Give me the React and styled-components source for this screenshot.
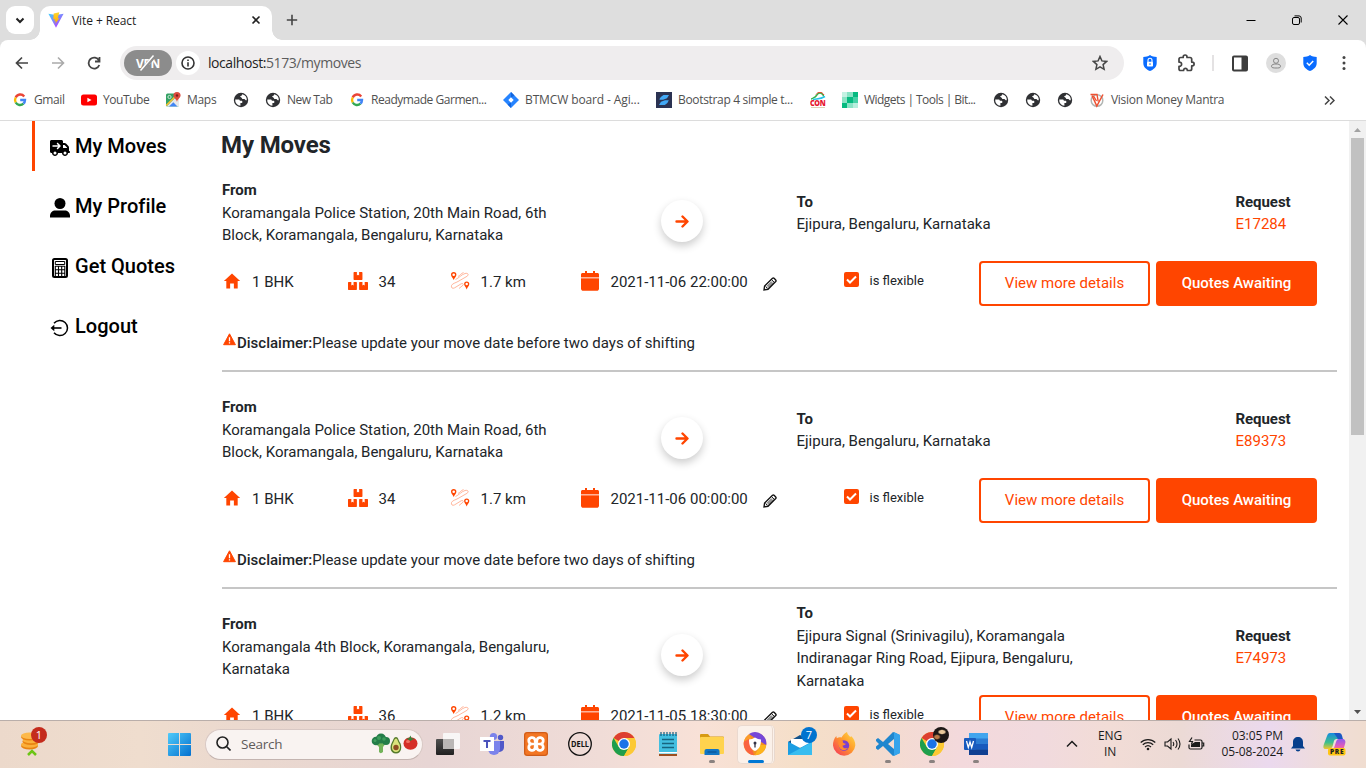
import React from 'react';
import styled, { createGlobalStyle } from 'styled-components';
import { FaBoxes } from 'react-icons/fa';
import { FaTruckArrowRight } from 'react-icons/fa6';
import { IoMdHome } from 'react-icons/io';

const ORANGE = '#ff4500';

const Global = createGlobalStyle`
  * { box-sizing: border-box; }
  body { margin: 0; overflow: hidden; background: #fff; font-family: Roboto, "Liberation Sans", sans-serif; }
  svg { display: block; flex: none; }
`;

const Screen = styled.div`
  width: 1366px;
  height: 768px;
  display: flex;
  flex-direction: column;
  overflow: hidden;
`;

/* ---------- browser chrome ---------- */
const TabStrip = styled.div`
  height: 40px;
  flex: none;
  display: flex;
  align-items: flex-start;
  padding: 6px 0 0 6px;
  background: #dedede;
`;
const TabSearch = styled.div`
  width: 28px;
  height: 28px;
  border-radius: 9px;
  background: #fff;
  display: grid;
  place-items: center;
`;
const Tab = styled.div`
  position: relative;
  width: 232px;
  height: 34px;
  margin-left: 6px;
  padding: 0 10px 6px 8px;
  border-radius: 10px 10px 0 0;
  background: #fff;
  display: flex;
  align-items: center;
  font: 12px "Open Sans", sans-serif;
  letter-spacing: -0.08px;
  color: #1f1f1f;
  &::before, &::after {
    content: '';
    position: absolute;
    bottom: 0;
    width: 10px;
    height: 10px;
  }
  &::before { left: -10px; background: radial-gradient(circle at 0 0, transparent 9.5px, #fff 10px); }
  &::after { right: -10px; background: radial-gradient(circle at 100% 0, transparent 9.5px, #fff 10px); }
`;
const TabTitle = styled.span`
  margin-left: 8px;
  flex: 1;
`;
const NewTab = styled.div`
  width: 40px;
  height: 28px;
  display: grid;
  place-items: center;
`;
const WindowButtons = styled.div`
  margin-left: auto;
  height: 28px;
  display: flex;
  & > * { width: 46px; display: grid; place-items: center; }
`;
const ToolbarBack = styled.div`
  flex: none;
  background: #dedede;
`;
const Toolbar = styled.div`
  height: 46px;
  display: flex;
  align-items: center;
  background: #fff;
  border-radius: 8px 8px 0 0;
`;
const ToolButton = styled.div`
  width: ${p => p.$w || 36}px;
  height: 36px;
  display: grid;
  place-items: center;
`;
const Omnibox = styled.div`
  width: 1004px;
  height: 34px;
  margin-left: 4px;
  padding: 0 6px 0 4px;
  border-radius: 17px;
  background: #efedee;
  display: flex;
  align-items: center;
`;
const VpnPill = styled.div`
  position: relative;
  width: 48px;
  height: 26px;
  border-radius: 13px;
  background: #8c8c8c;
  color: #fff;
  display: grid;
  place-items: center;
  font: 700 12px "Open Sans", sans-serif;
  & > span { letter-spacing: -0.3px; }
  & > svg { position: absolute; left: 11px; top: 4px; }
`;
const SiteInfo = styled.div`
  width: 24px;
  height: 24px;
  margin: 0 8px 0 4px;
  border-radius: 50%;
  background: #fff;
  display: grid;
  place-items: center;
`;
const Url = styled.div`
  flex: 1;
  padding-bottom: 1px;
  font: 14px "Open Sans", sans-serif;
  letter-spacing: -0.43px;
  color: #5c5c5c;
  & > b { font-weight: 400; color: #1f1f1f; }
`;
const Separator = styled.div`
  width: 2px;
  height: 16px;
  margin-left: 16px;
  background: #e4e2e3;
`;
const Avatar = styled.div`
  width: 20px;
  height: 20px;
  border-radius: 50%;
  background: #dedede;
  display: grid;
  place-items: center;
`;
const Bookmarks = styled.div`
  height: 35px;
  flex: none;
  display: flex;
  align-items: center;
  padding: 0 26px 6px 12px;
  border-bottom: 1px solid #dcdcdc;
  background: #fff;
`;
const Bookmark = styled.div`
  width: ${p => p.$w}px;
  flex: none;
  display: flex;
  align-items: center;
  gap: 6px;
  font: 12px "Open Sans", sans-serif;
  letter-spacing: ${p => p.$ls ?? -0.3}px;
  white-space: nowrap;
  color: #505050;
  & > span { padding-bottom: 1px; }
`;
const Overflow = styled.div`
  margin-left: auto;
  margin-right: 5px;
`;

/* ---------- page ---------- */
const Viewport = styled.div`
  height: 599px;
  flex: none;
  display: flex;
  overflow: hidden;
  background: #fff;
`;
const Sidebar = styled.nav`
  width: 222px;
  flex: none;
  padding-left: 32px;
  display: flex;
  flex-direction: column;
  gap: 10px;
`;
const NavItem = styled.a`
  height: 50px;
  padding-left: 15px;
  border-left: 3px solid ${p => (p.$active ? ORANGE : 'transparent')};
  display: flex;
  align-items: center;
  gap: 5px;
  font-size: 20px;
  font-weight: 500;
  letter-spacing: 0.02px;
  color: #000;
  & > svg { margin-top: 3px; }
`;
const Main = styled.main`
  width: 1115px;
  flex: none;
  color: #212529;
  font-size: 15px;
`;
const Title = styled.h1`
  height: 34px;
  margin: 0 0 0 -1px;
  padding-top: 10px;
  font-size: 24px;
  line-height: 28px;
  font-weight: 700;
  letter-spacing: -0.12px;
`;
const Card = styled.section`
  height: 217px;
  padding-top: 13px;
  border-bottom: 2px solid #c6c6c6;
`;
const Route = styled.div`
  height: 90px;
  display: grid;
  grid-template-columns: 439px 135.5px 439px 1fr;
  align-items: center;
  line-height: 22.5px;
`;
const Place = styled.div`
  width: ${p => p.$w}px;
`;
const Label = styled.div`
  font-weight: 700;
  letter-spacing: -0.05px;
`;
const RequestId = styled.div`
  color: ${ORANGE};
`;
const ArrowCircle = styled.div`
  width: 42px;
  height: 42px;
  margin-top: 16px;
  border-radius: 50%;
  background: #fff;
  box-shadow: 0 4px 8px rgba(0, 0, 0, 0.2);
  display: grid;
  place-items: center;
`;
const Details = styled.div`
  height: 45px;
  margin-top: 3px;
  display: flex;
  align-items: center;
`;
const Stat = styled.div`
  width: ${p => p.$w}px;
  height: 45px;
  display: flex;
  align-items: center;
  padding-bottom: 3px;
  white-space: nowrap;
`;
const StatIcon = styled.div`
  width: ${p => p.$w}px;
  color: ${ORANGE};
  padding-bottom: 2px;
`;
const Edit = styled.div`
  margin: 3px 0 0 15px;
`;
const Flexible = styled.label`
  width: 135px;
  display: flex;
  align-items: center;
  gap: 10.5px;
  padding-bottom: 6px;
  font-size: 13px;
`;
const Check = styled.span`
  width: 15px;
  height: 15px;
  margin-top: -2px;
  border-radius: 2px;
  background: ${ORANGE};
  display: grid;
  place-items: center;
`;
const Button = styled.button`
  width: ${p => p.$w}px;
  height: 45px;
  padding: 0 0 2px;
  margin-right: 6px;
  border: 2px solid ${ORANGE};
  border-radius: 4px;
  background: ${p => (p.$solid ? ORANGE : '#fff')};
  color: ${p => (p.$solid ? '#fff' : ORANGE)};
  font: ${p => (p.$solid ? 500 : 400)} 15px Roboto, sans-serif;
  letter-spacing: ${p => (p.$solid ? -0.03 : 0.02)}px;
`;
const Disclaimer = styled.div`
  display: flex;
  align-items: center;
  margin-top: 28px;
  line-height: 18px;
  & > svg { margin: -7px 1px 0 1px; }
  & > b { font-weight: 500; }
`;
const Scrollbar = styled.div`
  width: 17px;
  margin-left: auto;
  background: #f1f1f1;
  display: flex;
  flex-direction: column;
  justify-content: space-between;
  align-items: center;
`;
const ScrollArrow = styled.div`
  height: 17px;
  display: grid;
  place-items: center;
`;
const Thumb = styled.div`
  width: 13px;
  height: 297px;
  margin-bottom: auto;
  background: #c1c1c1;
`;

/* ---------- taskbar ---------- */
const Taskbar = styled.div`
  height: 48px;
  flex: none;
  display: flex;
  align-items: center;
  border-top: 1px solid #b9aeaa;
  background: linear-gradient(90deg, #ecd9cb 0, #efddce 140px, #ead8cf 260px, #e7d5d4 430px, #f0dcd7 600px, #f8e1d7 700px, #f5dfc9 800px, #f4dccb 860px, #f3d9dc 960px, #f1dade 1040px, #f2dcd6 1110px, #ecdad5 1180px, #ebd9ee 1270px, #f0ddd5 1340px, #f0ddd0 1366px);
  color: #1b1b1b;
`;
const Widget = styled.div`
  position: relative;
  width: 158px;
  height: 47px;
  padding: 10px 0 0 19px;
`;
const Badge = styled.span`
  position: absolute;
  left: ${p => p.$x}px;
  top: ${p => p.$y}px;
  width: 16px;
  height: 16px;
  border-radius: 50%;
  background: ${p => p.$color};
  color: #fff;
  text-align: center;
  font: 11px/16px "Open Sans", sans-serif;
`;
const Start = styled.div`
  width: 47px;
  padding: 0 0 1px 10px;
`;
const Search = styled.div`
  width: 218px;
  height: 31px;
  margin: 0 3px 1px 0;
  padding: 0 3px 1px 10px;
  border: 1px solid #d8c8c4;
  border-bottom-color: #c4b4b0;
  border-radius: 16px;
  background: #f9f3f1;
  display: flex;
  align-items: center;
  color: #5f5b5a;
  font: 13.5px "Open Sans", sans-serif;
  letter-spacing: -0.25px;
  & > span { flex: 1; margin-left: 10px; }
`;
const AppIcon = styled.div`
  position: relative;
  width: 44px;
  height: 47px;
  padding-bottom: 1px;
  display: grid;
  place-items: center;
  &::after {
    content: '';
    position: absolute;
    bottom: 5px;
    left: ${p => (p.$active ? 14 : 19)}px;
    width: ${p => (p.$active ? 16 : 6)}px;
    height: 3px;
    border-radius: 2px;
    background: ${p => (p.$active ? '#0078d4' : p.$running ? '#8a8280' : 'transparent')};
  }
`;
const ActiveTile = styled.div`
  width: 38px;
  height: 39px;
  border-radius: 5px;
  border: 1px solid #ead9cf;
  border-right: 3px double #e8d8ce;
  background: #fbf1ea;
  display: grid;
  place-items: center;
`;
const Tray = styled.div`
  margin-left: auto;
  width: 304px;
  padding-bottom: 1px;
  display: flex;
  align-items: center;
  font: 12px/16px "Open Sans", sans-serif;
`;
const TrayItem = styled.div`
  width: ${p => p.$w}px;
  display: flex;
  justify-content: center;
`;
const TrayText = styled.div`
  width: ${p => p.$w}px;
  text-align: ${p => p.$align};
  white-space: nowrap;
  letter-spacing: -0.1px;
`;

/* ---------- drawings ---------- */
const Svg = ({ w = 16, h, box, children, ...rest }) => (
  <svg width={w} height={h || w} viewBox={box || `0 0 ${w} ${h || w}`} fill="none" {...rest}>{children}</svg>
);

const GoogleG = () => (
  <Svg w={16}>
    <g strokeWidth="2.4">
      <path d="M12.2 4.4A5 5 0 0 0 3.7 5.5" stroke="#ea4335" />
      <path d="M3.7 5.5a5 5 0 0 0 0 5" stroke="#fbbc05" />
      <path d="M3.7 10.5a5 5 0 0 0 7.7 1.2" stroke="#34a853" />
      <path d="M11.4 11.7A5 5 0 0 0 13 8H8.2" stroke="#4285f4" />
    </g>
  </Svg>
);
const YouTube = () => (
  <Svg w={16}><rect y="2.5" width="16" height="11" rx="2.5" fill="#f00" /><path d="M6.4 5.7v4.6L10.5 8z" fill="#fff" /></Svg>
);
const MapsLogo = () => (
  <Svg w={16}>
    <rect x="1" y="1.5" width="13" height="13" rx="1.5" fill="#34a265" />
    <path d="M1.5 14.5 12 4l2 2v8.5z" fill="#e8e8e8" /><path d="m4 14.5 4.3-4.3 4.2 4.3z" fill="#4285f4" />
    <path d="M1.200 13.500 11 3.700" stroke="#fbc02d" strokeWidth="1.600" />
    <circle cx="4.500" cy="5" r="1.600" stroke="#cfe9d8" />
    <path d="M12 0a3.600 3.600 0 0 1 3.600 3.600C15.600 6 12.500 7 12 10c-.5-3-3.600-4-3.600-6.400A3.600 3.600 0 0 1 12 0" fill="#dd4b3e" /><circle cx="12" cy="3.500" r="1.200" fill="#7d1f1a" />
  </Svg>
);
const Globe = () => (
  <Svg w={16}>
    <circle cx="8" cy="8" r="7.200" fill="#2f3033" />
    <path d="M2.200 7.400h3.300c1 0 1.400.7 1.400 1.400h1.300c.8 0 1.200.5 1.200 1.100 0 .7-.5 1.200-1.200 1.200h-.8v2.700A5.900 5.900 0 0 1 2.200 7.400M9 2.200c.2 1-.4 1.700-1.300 1.700-.5 0-.7.500-.3.900l1.200 1c.5.4.3 1 .9 1.200h1.800c.7 0 .8 1.200 1.500 1.200h1A5.900 5.900 0 0 0 9 2.200" fill="#fff" />
  </Svg>
);
const Jira = () => (
  <Svg w={16}><path d="M8 0 16 8l-8 8-8-8z" fill="#2684ff" /><path d="m8 5.300 2.700 2.700L8 10.700 5.300 8z" fill="#fff" /><path d="m8 0 3.500 3.500-3.500 2V0M8 16l-3.500-3.500 3.500-2z" fill="#1264dc" /></Svg>
);
const BootLogo = () => (
  <Svg w={16}><rect width="16" height="16" fill="#2b3252" /><path d="M7.500 3H13l-2 3.200L7 7.700H3.500Q3.500 5.500 7.500 3M9 8.300h3.800q-.5 2.500-4 4.700H3l2-3.200z" fill="#42a8f5" /></Svg>
);
const ConLogo = () => (
  <Svg w={16}>
    <path d="M1 7c2 0 3-2 4-2s2-4 5-4 3 3 4 3" stroke="#35b34a" strokeWidth="1.500" /><path d="M6 2.500C8-.5 12-.5 14 3" stroke="#e8402a" /><path d="M3 7.500c4-1 7 0 12-3" stroke="#25c4e8" strokeWidth="1.500" />
    <text x="0" y="14" fontFamily="Open Sans" fontWeight="800" fontSize="8" fill="#e6142d" textLength="15.500" lengthAdjust="spacingAndGlyphs">CON</text>
    <path d="M1 15.500h14" stroke="#d8c6a4" strokeWidth=".8" />
  </Svg>
);
const WidgetLogo = () => (
  <Svg w={16}>
    <rect width="16" height="16" fill="#8ae3c5" /><path d="M0 0h5v5H0z" fill="#c4f2e3" /><path d="M11 0h5v5h-5zM5 5h6v6H5zM0 11h5v5H0z" fill="#05ba80" /><path d="M11 5h5v6h-5z" fill="#45d1a6" /><path d="M11 11h5v5h-5z" fill="#b7eedd" />
  </Svg>
);
const VisionLogo = () => (
  <Svg w={16}><circle cx="8" cy="8.500" r="5.800" stroke="#b2b6b4" strokeWidth="1.500" /><path d="M3 3.500 7.800 14 14 2.500" stroke="#ee5132" strokeWidth="1.500" /><path d="M1.500 2.500h6.500l1.200 7M4.500 4 7.500 9" stroke="#ee5132" strokeWidth="1.400" /></Svg>
);
const ViteLogo = () => (
  <Svg w={16}>
    <defs>
      <linearGradient id="va" x1="0" y1="0" x2=".8" y2="1"><stop stopColor="#41d1ff" /><stop offset="1" stopColor="#bd34fe" /></linearGradient>
      <linearGradient id="vb" x1="0" y1="0" x2="0" y2="1"><stop stopColor="#ffd62e" /><stop offset="1" stopColor="#ffa800" /></linearGradient>
    </defs>
    <path d="M.4 1.700 8 15.700l7.600-14L8 3z" fill="url(#va)" /><path d="m11.300.3-5.600 1.100-.4 6 1.700-.4-.5 2.500 1.500-.5L7.200 12l4.300-6-1.800.4z" fill="url(#vb)" />
  </Svg>
);
const DistanceIcon = () => (
  <Svg w={20}>
    <path d="M5.500 8.500c3.500-1.500 6-5 9.500-6 3-.8 4.200 1.200 2 2.800L8 10.500c-2.500 1.500-5.500 1.800-6.500 4-.6 2.200 1 3.500 3 2.400l6.500-4c2-1 2.800.3 2 1.300l-4 3.300M8 5.500c2-1 3-3 5.500-4" stroke="#ffa383" strokeWidth=".8" />
    <g fill={ORANGE} fillRule="evenodd"><path d="M3.700 1a2.700 2.700 0 0 1 2.700 2.700C6.400 5.500 4.500 6.500 3.700 9 2.900 6.500 1 5.500 1 3.700A2.700 2.700 0 0 1 3.700 1m0 1.400a1.300 1.300 0 1 0 0 2.600 1.300 1.300 0 0 0 0-2.600M16.700 10.500a2.600 2.600 0 0 1 2.600 2.600c0 1.800-1.800 2.800-2.600 5.300-.8-2.500-2.600-3.500-2.600-5.300a2.600 2.600 0 0 1 2.600-2.600m0 1.300a1.200 1.200 0 1 0 0 2.500 1.200 1.200 0 0 0 0-2.500" /></g>
  </Svg>
);
const Calendar = () => (
  <Svg w={18} h={20}><path d="M0 6V3.500C0 2.700.7 2 1.500 2H4V0h2v2h6V0h2v2h2.500c.8 0 1.500.7 1.500 1.500V6z" fill={ORANGE} /><path d="M0 7.200h18v10.300c0 1.400-1 2.300-2.300 2.300H2.300C1 19.800 0 18.900 0 17.500z" fill={ORANGE} /><path d="M0 6h18v1.200H0z" fill="#ffb399" /></Svg>
);
const Pencil = () => (
  <Svg w={14}><path d="m1 13 .6-4L9.500 1.300q.8-.6 1.600 0l1.600 1.600q.7.800 0 1.600L5 12.300z" stroke="#111" strokeWidth="1.400" /><path d="m2.500 9.500 2 2M8.500 2.500l3 3M4 9.500l5-5M5 10.500l5-5" stroke="#111" strokeWidth=".9" /></Svg>
);
const Warning = () => (
  <Svg w={13}><path d="M6.500.8 12.400 11.700H.6z" fill={ORANGE} stroke={ORANGE} strokeWidth="1" strokeLinejoin="round" /><path d="M6.500 4.200v4M6.500 9.200v1.400" stroke="#fff" strokeWidth="1.300" /></Svg>
);
const PersonIcon = () => (
  <Svg w={20}><circle cx="10" cy="5.500" r="5.500" fill="#000" /><path d="M0 19.500V18c0-3.500 2.500-5.500 5.500-5.500h9c3 0 5.500 2 5.500 5.500v1.500z" fill="#000" /></Svg>
);
const CalculatorIcon = () => (
  <Svg w={20}><rect x="3" y="1" width="14" height="18" rx="1.500" stroke="#000" strokeWidth="2" /><path d="M5.300 3.500h9.400v3H5.300z" stroke="#000" strokeWidth="1" /><path d="M5 8.200h10M5 11.800h10M5 15.200h10M5.300 8V18M8.500 8v10M11.700 8v10M14.800 8v10" stroke="#000" strokeWidth="1.100" /></Svg>
);
const LogoutIcon = () => (
  <Svg w={20}><path d="M4 5.200A7.600 7.600 0 1 1 4 14.800" stroke="#000" strokeWidth="1.500" /><path d="M11.500 10H2" stroke="#000" strokeWidth="1.600" /><path d="M.5 10 4.300 6.800v6.400z" fill="#000" /></Svg>
);
const Shield = ({ children }) => (
  <Svg w={16}><path d="M8 0c2 1.500 4.200 1.800 6.700 1.900V8c0 4-3 6.500-6.700 8-3.700-1.500-6.700-4-6.700-8V1.900C3.800 1.800 6 1.500 8 0" fill="#0a6cff" />{children}</Svg>
);
const ChromeLogo = () => (
  <Svg w={24} box="0 0 48 48">
    <circle cx="24" cy="24" r="24" fill="#fcc934" />
    <path d="M24 24 3.200 12a24 24 0 0 1 41.600 0H24z" fill="#dd3f31" /><path d="M3.200 12A24 24 0 0 0 24 48l10.400-18L13.600 30z" fill="#1e9e4d" />
    <path d="M24 12h20.800A24 24 0 0 1 24 48l10.400-18z" fill="#fcc934" /><circle cx="24" cy="24" r="12" fill="#fff" /><circle cx="24" cy="24" r="9.500" fill="#1a73e8" />
  </Svg>
);
const Foods = () => (
  <Svg w={48} h={22}>
    <path d="M7 9h5l3 1-3 4v5c-1.500 1.500-3 1.500-4 0v-5L4 10z" fill="#73b35a" />
    <g fill="#247d49"><circle cx="5" cy="8" r="4.300" /><circle cx="10" cy="5.500" r="5" /><circle cx="15" cy="8" r="4" /></g><g fill="#3f9e5d"><circle cx="8" cy="5" r="2" /><circle cx="13" cy="6" r="1.800" /><circle cx="4" cy="7.500" r="1.500" /></g>
    <path d="M25 4c2.300 0 2.600 3.500 4 5.500 2 3 2.200 11-4 11s-6.300-7.500-4.200-10.800C22.200 7.500 22.700 4 25 4" fill="#557a2b" /><path d="M25 5.500c1.500 0 1.800 3 3 4.800 2 3 1.300 8.700-3 8.700s-4.800-5.500-3.200-8.500C23 8.500 23.500 5.500 25 5.500" fill="#dbe27c" /><circle cx="25" cy="14.500" r="2.700" fill="#8f4e22" />
    <ellipse cx="39.500" cy="10.500" rx="7" ry="6.200" fill="#d52d27" /><ellipse cx="37" cy="8.500" rx="2" ry="1.500" fill="#f17060" /><path d="m35 5.500 3-.2 1.500-2.800 1 2.700 3.500.5-3 1-1.300 1.300L38 7z" fill="#34823a" />
  </Svg>
);
const Coins = () => (
  <Svg w={24} h={27}>
    <ellipse cx="10.500" cy="15" rx="8.500" ry="3.500" fill="#e98412" /><ellipse cx="10.500" cy="13.500" rx="8.500" ry="3.200" fill="#fbb03b" />
    <ellipse cx="12" cy="10.500" rx="8.500" ry="3.500" fill="#e98412" /><ellipse cx="12" cy="9" rx="8.500" ry="3.200" fill="#fbb03b" />
    <ellipse cx="10.500" cy="6" rx="8.500" ry="3.500" fill="#e98412" /><ellipse cx="10.500" cy="4.700" rx="8.500" ry="3.200" fill="#fdb94b" />
    <path d="m9 24 4-4 4 4" stroke="#6cc516" strokeWidth="2.500" />
  </Svg>
);
const TaskView = () => (
  <Svg w={24}><defs><linearGradient id="ta" x1="0" y1="0" x2="0" y2="1"><stop stopColor="#505050" /><stop offset="1" stopColor="#202020" /></linearGradient></defs><rect x="7" y="1" width="17" height="16" rx="1" fill="#f8f6f6" /><rect y="7" width="18" height="16" rx="1" fill="url(#ta)" /><path d="M7 7h11v10H7z" fill="#b9b6b5" /></Svg>
);
const Teams = () => (
  <Svg w={24}><circle cx="20.500" cy="5.500" r="2.700" fill="#5059c9" /><path d="M16 9h8v6.500a4.500 4.500 0 0 1-5 4.500z" fill="#5059c9" /><circle cx="13.500" cy="4.500" r="3.600" fill="#7b83eb" /><path d="M8 9h12v8a6 6 0 0 1-12 0z" fill="#7b83eb" /><path d="M0 5h14v14H0z" fill="#fff" /><path d="M3.500 9h7M7 9v7" stroke="#4b53bc" strokeWidth="2" /></Svg>
);
const Xampp = () => (
  <Svg w={24}>
    <rect width="24" height="24" rx="3" fill="#f37623" /><rect x=".7" y=".7" width="22.600" height="22.600" rx="2.500" stroke="#c55718" />
    <path d="M12 12H8a3.200 3.200 0 1 1 3-4.200Q11 10 12 12q1-2 1-4.200A3.200 3.200 0 1 1 16 12h-4m0 0H8a3.200 3.200 0 1 0 3 4.200Q11 14 12 12q1 2 1 4.200A3.200 3.200 0 1 0 16 12" stroke="#fff" strokeWidth="2.700" strokeLinejoin="round" />
  </Svg>
);
const Dell = () => (
  <Svg w={24}><circle cx="12" cy="12" r="11.300" stroke="#111" strokeWidth="1.300" /><text x="3" y="15" fontFamily="Open Sans" fontWeight="700" fontSize="8" fill="#111" textLength="18" lengthAdjust="spacingAndGlyphs">DELL</text></Svg>
);
const Notepad = () => (
  <Svg w={24}><path d="M3 20h18v4H3z" fill="#9c4f20" /><rect x="3" y="2" width="18" height="20" rx="1" fill="#43bfe0" /><path d="M3 20h18v1.500H3z" fill="#fff" /><path d="M5 0v4M8 0v4M11 0v4M14 0v4M17 0v4M20 0v4" stroke="#175d7d" strokeWidth="1.200" /><path d="M6 7.500h12M6 11.500h12M6 15.500h12" stroke="#17647f" strokeWidth="1.500" /></Svg>
);
const Explorer = () => (
  <Svg w={24}><path d="M0 3a1 1 0 0 1 1-1h7l2 2.500h13a1 1 0 0 1 1 1V10H0z" fill="#d79b13" /><rect y="5" width="24" height="17" rx="1" fill="#ffd34e" /><path d="M4.500 23v-4a2 2 0 0 1 2-2h11a2 2 0 0 1 2 2v4z" fill="#1175c4" /><path d="M7.500 20h9" stroke="#0b5a9e" strokeWidth="1.500" /></Svg>
);
const SecureBrowser = () => (
  <Svg w={24}><circle cx="12" cy="12" r="11.300" fill="#f5901e" /><path d="M6 2a11.300 11.300 0 0 1 17.200 11L15 8z" fill="#7647d8" /><path d="M1 9.500A11.300 11.300 0 0 1 6 2.400L9 8 6 13z" fill="#fb9b2a" /><path d="M1 9.500 6 7l5 16.200A11.300 11.300 0 0 1 1 9.500" fill="#fa6340" /><path d="M23.200 13A11.300 11.300 0 0 1 12 23.300L17 13z" fill="#fdb51d" /><path d="M12 5.500q3 2 6 2c0 5-1 9.500-6 11.500-5-2-6-6.500-6-11.500q3 0 6-2" fill="#fff" /><circle cx="12" cy="11" r="1.500" fill="#334" /><path d="M12 11v4.500" stroke="#334" strokeWidth="1.300" /></Svg>
);
const Mail = () => (
  <Svg w={24}><path d="m0 10 12-7 12 7v1H0z" fill="#13538b" /><path d="M3 7h18v8H3z" fill="#fff" /><path d="M0 9.500 12 16l12-6.500V23H0z" fill="#1b9de2" /><path d="M0 23 24 10v13z" fill="#38bdf0" /></Svg>
);
const Firefox = () => (
  <Svg w={24}>
    <defs><linearGradient id="fa" x1="1" y1="0" x2="0" y2="1"><stop stopColor="#ffe04a" /><stop offset=".45" stopColor="#ff9a2b" /><stop offset="1" stopColor="#f52f5f" /></linearGradient></defs>
    <path d="M15 0c.4 2.500 2.200 3.600 3.400 5.200L19 4c3 2.500 4.500 6 4.300 9.500A11.200 11.200 0 0 1 1 13.500C.8 10 2 6.500 4.300 4l.5 2.200C6.500 5 8 5 9.500 5.500c1.500-2.500 3-4.500 5.500-5.500" fill="url(#fa)" />
    <circle cx="12" cy="13.500" r="5.200" fill="#7b3fd0" /><path d="M6.500 9c1.500-1 3-1 4.500 0-.8 1.500.5 2.500 3 2.700-1 1.800-3 1.500-3.500 2 .3 2.300 3 3.300 5.500 2-2 3.500-7.500 3-9-1-.8-2-.8-4-.5-5.700" fill="#ff8a30" />
  </Svg>
);
const VsCode = () => (
  <Svg w={24}><path d="m17 0 7 3v18l-7 3L7 14l-5 4-2-1.500v-2L3 12 0 9V7.500L2 6l5 4zm1 7-6 5 6 5z" fill="#1f86ce" fillRule="evenodd" /><path d="m18 0 6 3v18l-6 3z" fill="#35a4ec" /></Svg>
);
const Word = () => (
  <Svg w={24}><rect x="5" y="1" width="19" height="22" rx="1" fill="#2b7cd3" /><path d="M5 1h19v5.500H5z" fill="#41a5ee" /><path d="M5 12h19v5.500H5z" fill="#185abd" /><path d="M5 17.500h19V23H5z" fill="#103f91" /><rect y="6" width="12" height="12" rx="1" fill="#185abd" /><path d="m2.500 9 1.800 6.500L6 10l1.700 5.500L9.500 9" stroke="#fff" strokeWidth="1.300" /></Svg>
);
const Photo = styled.span`
  position: absolute;
  left: 23px;
  top: 6px;
  width: 16px;
  height: 16px;
  border-radius: 50%;
  background: radial-gradient(ellipse 5px 3px at 9px 5px, #e8c79a 0 50%, transparent 90%), radial-gradient(ellipse 4px 3px at 4px 10px, #b97a48 0 50%, transparent 95%), #1d1716;
`;
const Copilot = () => (
  <Svg w={26}>
    <defs>
      <linearGradient id="ca" x1="0" y1="0" x2="0" y2="1"><stop stopColor="#158be0" /><stop offset=".6" stopColor="#3fc08a" /><stop offset="1" stopColor="#f1c52d" /></linearGradient>
      <linearGradient id="cb" x1="0" y1="0" x2="0" y2="1"><stop stopColor="#8c5af0" /><stop offset=".6" stopColor="#e45bb8" /><stop offset="1" stopColor="#f88b6a" /></linearGradient>
    </defs>
    <path d="M8 2h8c3 0 3 3 4 6h-5c-3 0-3 2-4 6-1 3-2 4-5 4H4c-3 0-3-2-2-5L5 5c.7-2 1.500-3 3-3" fill="url(#ca)" /><path d="M12 2h5c3 0 3 3 4 6h-5z" fill="#1b59c4" /><path d="M17 8h3c3 0 4 2 3 5l-2 7H11l3-9c.5-2 1.500-3 3-3" fill="url(#cb)" />
    <rect x="6" y="17" width="17.500" height="7.500" rx="2" fill="#ffc513" /><text x="8" y="23.300" fontFamily="Open Sans" fontWeight="800" fontSize="6.500" fill="#222" textLength="13.500">PRE</text>
  </Svg>
);

const bookmarks = [
  [GoogleG, 'Gmail', 69, -0.4], [YouTube, 'YouTube', 84, -0.45], [MapsLogo, 'Maps', 68, -0.3], [Globe, '', 32], [Globe, 'New Tab', 84, -0.5],
  [GoogleG, 'Readymade Garmen...', 154, -0.46], [Jira, 'BTMCW board - Agi...', 153, -0.12], [BootLogo, 'Bootstrap 4 simple t...', 154, -0.33],
  [ConLogo, '', 32], [WidgetLogo, 'Widgets | Tools | Bit...', 151, -0.55], [Globe, '', 32], [Globe, '', 32], [Globe, '', 32], [VisionLogo, 'Vision Money Mantra', 150, -0.28],
];

const longFrom = 'Koramangala Police Station, 20th Main Road, 6th Block, Koramangala, Bengaluru, Karnataka';
const moves = [
  { id: 'E17284', from: longFrom, to: 'Ejipura, Bengaluru, Karnataka', items: 34, km: '1.7 km', date: '2021-11-06 22:00:00' },
  { id: 'E89373', from: longFrom, to: 'Ejipura, Bengaluru, Karnataka', items: 34, km: '1.7 km', date: '2021-11-06 00:00:00' },
  { id: 'E74973', from: 'Koramangala 4th Block, Koramangala, Bengaluru, Karnataka', to: 'Ejipura Signal (Srinivagilu), Koramangala Indiranagar Ring Road, Ejipura, Bengaluru, Karnataka', items: 36, km: '1.2 km', date: '2021-11-05 18:30:00' },
];

const Move = ({ move }) => (
  <Card>
    <Route>
      <Place $w={335}><Label>From</Label>{move.from}</Place>
      <ArrowCircle><Svg w={14} stroke={ORANGE} strokeWidth="2.400" strokeLinecap="round" strokeLinejoin="round"><path d="M1.500 7.500H12M7.500 2.500l5 5-5 5" /></Svg></ArrowCircle>
      <Place $w={300}><Label>To</Label>{move.to}</Place>
      <Place $w={90}><Label>Request</Label><RequestId>{move.id}</RequestId></Place>
    </Route>
    <Details>
      <Stat $w={126}><StatIcon $w={30}><IoMdHome size={20} /></StatIcon>1 BHK</Stat>
      <Stat $w={102}><StatIcon $w={30.5}><FaBoxes size={20} /></StatIcon>{move.items}</Stat>
      <Stat $w={131}><StatIcon $w={30.5}><DistanceIcon /></StatIcon>{move.km}</Stat>
      <Stat $w={263}><StatIcon $w={29.5}><Calendar /></StatIcon>{move.date}<Edit><Pencil /></Edit></Stat>
      <Flexible><Check><Svg w={11} stroke="#fff" strokeWidth="2"><path d="m1 5.500 3 3L10 2.500" /></Svg></Check>is flexible</Flexible>
      <Button $w={171}>View more details</Button>
      <Button $w={161} $solid>Quotes Awaiting</Button>
    </Details>
    <Disclaimer><Warning /><b>Disclaimer:</b>Please update your move date before two days of shifting</Disclaimer>
  </Card>
);

export default function App() {
  return (
    <Screen>
      <Global />
      <TabStrip>
        <TabSearch><Svg w={10} stroke="#222" strokeWidth="2"><path d="m1.500 3.500 3.500 3.500 3.500-3.500" /></Svg></TabSearch>
        <Tab><ViteLogo /><TabTitle>Vite + React</TabTitle><Svg w={12} stroke="#222" strokeWidth="1.600"><path d="m2.500 2.500 7 7M9.500 2.500l-7 7" /></Svg></Tab>
        <NewTab><Svg w={12} stroke="#444" strokeWidth="1.600"><path d="M6 .8v10.400M.8 6h10.400" /></Svg></NewTab>
        <WindowButtons>
          <div><Svg w={10} stroke="#000"><path d="M.5 5.500h9" /></Svg></div>
          <div><Svg w={10} stroke="#000"><rect x=".5" y="2.500" width="7" height="7" rx="1.500" /><path d="M2.500.9H7A2.200 2.200 0 0 1 9.200 3v4.500" /></Svg></div>
          <div><Svg w={10} stroke="#000" strokeWidth="1.100"><path d="m.5.5 9 9M9.500.5l-9 9" /></Svg></div>
        </WindowButtons>
      </TabStrip>
      <ToolbarBack>
        <Toolbar>
          <ToolButton $w={44}><Svg w={14} stroke="#444" strokeWidth="1.700"><path d="M13 7H2M7 1.500 1.500 7 7 12.500" /></Svg></ToolButton>
          <ToolButton $w={28}><Svg w={14} stroke="#aaa" strokeWidth="1.600"><path d="M1 7h11M7 1.500 12.500 7 7 12.500" /></Svg></ToolButton>
          <ToolButton $w={44}><Svg w={14} stroke="#444" strokeWidth="1.800"><path d="M12 4.500a5.500 5.500 0 1 0 .3 4.500M12.500 1v4.500H8" /></Svg></ToolButton>
          <Omnibox>
            <VpnPill><span>VPN</span><Svg w={26} h={18}><path d="m7 16.500 12-14" stroke="#8c8c8c" strokeWidth="3.500" /><path d="m5.500 16.500 13-15" stroke="#fff" strokeWidth="1.500" /></Svg></VpnPill>
            <SiteInfo><Svg w={14} stroke="#333" strokeWidth="1.600"><circle cx="7" cy="7" r="6" /><path d="M7 6.200V10.500M7 3.500v1.600" /></Svg></SiteInfo>
            <Url><b>localhost:</b>5173/mymoves</Url>
            <ToolButton><Svg w={16} stroke="#474747" strokeWidth="1.500"><path d="m8 1.500 1.900 4.400 4.700.5-3.500 3.200 1 4.700L8 11.800l-4.100 2.500 1-4.700L1.400 6.400l4.700-.5z" /></Svg></ToolButton>
          </Omnibox>
          <ToolButton $w={52}><Shield><rect x="5" y="6.800" width="6" height="4.700" rx=".8" fill="#fff" /><path d="M6 7V5.200a2 2 0 0 1 4 0V7" stroke="#fff" strokeWidth="1.100" /><path d="M8 8.200v1.800" stroke="#0a6cff" /></Shield></ToolButton>
          <ToolButton $w={20}><Svg w={18} stroke="#444" strokeWidth="1.700" strokeLinejoin="round"><path d="M2 5.200q0-1.700 1.700-1.700h2.500v-.6a1.900 1.900 0 0 1 3.800 0v.6h3q1.700 0 1.700 1.700v2.900h.5a1.900 1.900 0 0 1 0 3.800h-.5v3q0 1.600-1.700 1.600h-2.700v-.6a1.900 1.900 0 0 0-3.700 0v.6H3.600Q2 16.500 2 14.900v-2.600h.5a2.100 2.100 0 0 0 0-4.200H2z" /></Svg></ToolButton>
          <Separator />
          <ToolButton $w={52}><Svg w={18}><rect x="2" y="2.500" width="14" height="14" rx="1" stroke="#3c3c3c" strokeWidth="2" /><path d="M10.500 2.500H16v14h-5.500z" fill="#3c3c3c" /></Svg></ToolButton>
          <ToolButton $w={20}><Avatar><Svg w={12} stroke="#858585" strokeWidth="1"><circle cx="6" cy="3.800" r="2.500" /><path d="M1.500 9.300C1.500 7.500 3.500 7 6 7s4.500.5 4.500 2.300S8.500 11 6 11s-4.500-.1-4.500-1.700Z" /></Svg></Avatar></ToolButton>
          <ToolButton $w={48}><Shield><path d="m4.800 7.800 2.400 2.400 4-4.200" stroke="#fff" strokeWidth="1.500" /></Shield></ToolButton>
          <ToolButton $w={20}><Svg w={4} h={16}><circle cx="2" cy="2.500" r="1.500" fill="#444" /><circle cx="2" cy="8" r="1.500" fill="#444" /><circle cx="2" cy="13.500" r="1.500" fill="#444" /></Svg></ToolButton>
        </Toolbar>
      </ToolbarBack>
      <Bookmarks>
        {bookmarks.map(([Icon, text, w, ls], i) => <Bookmark key={i} $w={w} $ls={ls}><Icon /><span>{text}</span></Bookmark>)}
        <Overflow><Svg w={11} stroke="#444" strokeWidth="1.500"><path d="m1 1.500 4 4-4 4M6 1.500l4 4-4 4" /></Svg></Overflow>
      </Bookmarks>
      <Viewport>
        <Sidebar>
          <NavItem $active><FaTruckArrowRight size={20} />My Moves</NavItem>
          <NavItem><PersonIcon />My Profile</NavItem>
          <NavItem><CalculatorIcon />Get Quotes</NavItem>
          <NavItem><LogoutIcon />Logout</NavItem>
        </Sidebar>
        <Main>
          <Title>My Moves</Title>
          {moves.map(m => <Move key={m.id} move={m} />)}
        </Main>
        <Scrollbar>
          <ScrollArrow><Svg w={7} h={4}><path d="M0 4 3.500 0 7 4z" fill="#a3a3a3" /></Svg></ScrollArrow>
          <Thumb />
          <ScrollArrow><Svg w={7} h={4}><path d="m0 0 3.500 4L7 0z" fill="#505050" /></Svg></ScrollArrow>
        </Scrollbar>
      </Viewport>
      <Taskbar>
        <Widget><Coins /><Badge $x={31} $y={6} $color="#c42b1c">1</Badge></Widget>
        <Start>
          <Svg w={23}>
            <defs><linearGradient id="wa" x1="0" y1="0" x2="23" y2="23" gradientUnits="userSpaceOnUse"><stop stopColor="#4fcbfa" /><stop offset="1" stopColor="#0470cf" /></linearGradient></defs>
            <path d="M0 1q0-1 1-1h10v11H0zM12 0h10q1 0 1 1v10H12zM0 12h11v11H1q-1 0-1-1zM12 12h11v10q0 1-1 1H12z" fill="url(#wa)" />
          </Svg>
        </Start>
        <Search><Svg w={15} stroke="#222" strokeWidth="1.600"><circle cx="6.500" cy="6.500" r="5.500" /><path d="m10.500 10.500 4 4" /></Svg><span>Search</span><Foods /></Search>
        <AppIcon><TaskView /></AppIcon>
        <AppIcon><Teams /></AppIcon>
        <AppIcon><Xampp /></AppIcon>
        <AppIcon><Dell /></AppIcon>
        <AppIcon><ChromeLogo /></AppIcon>
        <AppIcon><Notepad /></AppIcon>
        <AppIcon $running><Explorer /></AppIcon>
        <AppIcon $active><ActiveTile><SecureBrowser /></ActiveTile></AppIcon>
        <AppIcon><Mail /><Badge $x={23} $y={6} $color="#0073cf">7</Badge></AppIcon>
        <AppIcon><Firefox /></AppIcon>
        <AppIcon $running><VsCode /></AppIcon>
        <AppIcon $running><ChromeLogo /><Photo /></AppIcon>
        <AppIcon $running><Word /></AppIcon>
        <Tray>
          <TrayItem $w={20}><Svg w={12} h={8} stroke="#1b1b1b" strokeWidth="1.500"><path d="m1 6.500 5-5 5 5" /></Svg></TrayItem>
          <TrayText $w={56} $align="center">ENG<br />IN</TrayText>
          <TrayItem $w={20}><Svg w={16} h={13} stroke="#1b1b1b" strokeWidth="1.200"><path d="M.7 4.500a10.500 10.500 0 0 1 14.600 0M2.800 6.800a7.500 7.500 0 0 1 10.400 0M5 9a4.400 4.400 0 0 1 6 0" /><circle cx="8" cy="11" r="1.300" fill="#1b1b1b" stroke="none" /></Svg></TrayItem>
          <TrayItem $w={28}><Svg w={17} h={14} stroke="#1b1b1b" strokeWidth="1.100"><path d="M1 5h2.500L7 2v10L3.500 9H1zM9 5q1.500 2 0 4M11.500 3q3 4 0 8M14 1.500q4 5.500 0 11" /></Svg></TrayItem>
          <TrayItem $w={20}><Svg w={17} h={14} stroke="#1b1b1b" strokeWidth="1.200"><path d="M6.500 3h6q1.500 0 1.500 1.500v6q0 1.500-1.500 1.500h-10Q1 12 1 10.500V7.500M14.500 6h1.200v3h-1.200" /><path d="M7 5h5v5H3V7.500z" fill="#1b1b1b" stroke="none" /><path d="m4 .5-2.500 4h3L3.500 7" /></Svg></TrayItem>
          <TrayText $w={77} $align="right">03:05 PM<br />05-08-2024</TrayText>
          <TrayItem $w={30}><Svg w={16}><path d="M8 1c3 0 5 2 5 5v4l2 2.500H1L3 10V6c0-3 2-5 5-5M5.500 13.500h5Q10 15.500 8 15.500t-2.500-2" fill="#073f8c" /></Svg></TrayItem>
          <TrayItem $w={44}><Copilot /></TrayItem>
        </Tray>
      </Taskbar>
    </Screen>
  );
}
